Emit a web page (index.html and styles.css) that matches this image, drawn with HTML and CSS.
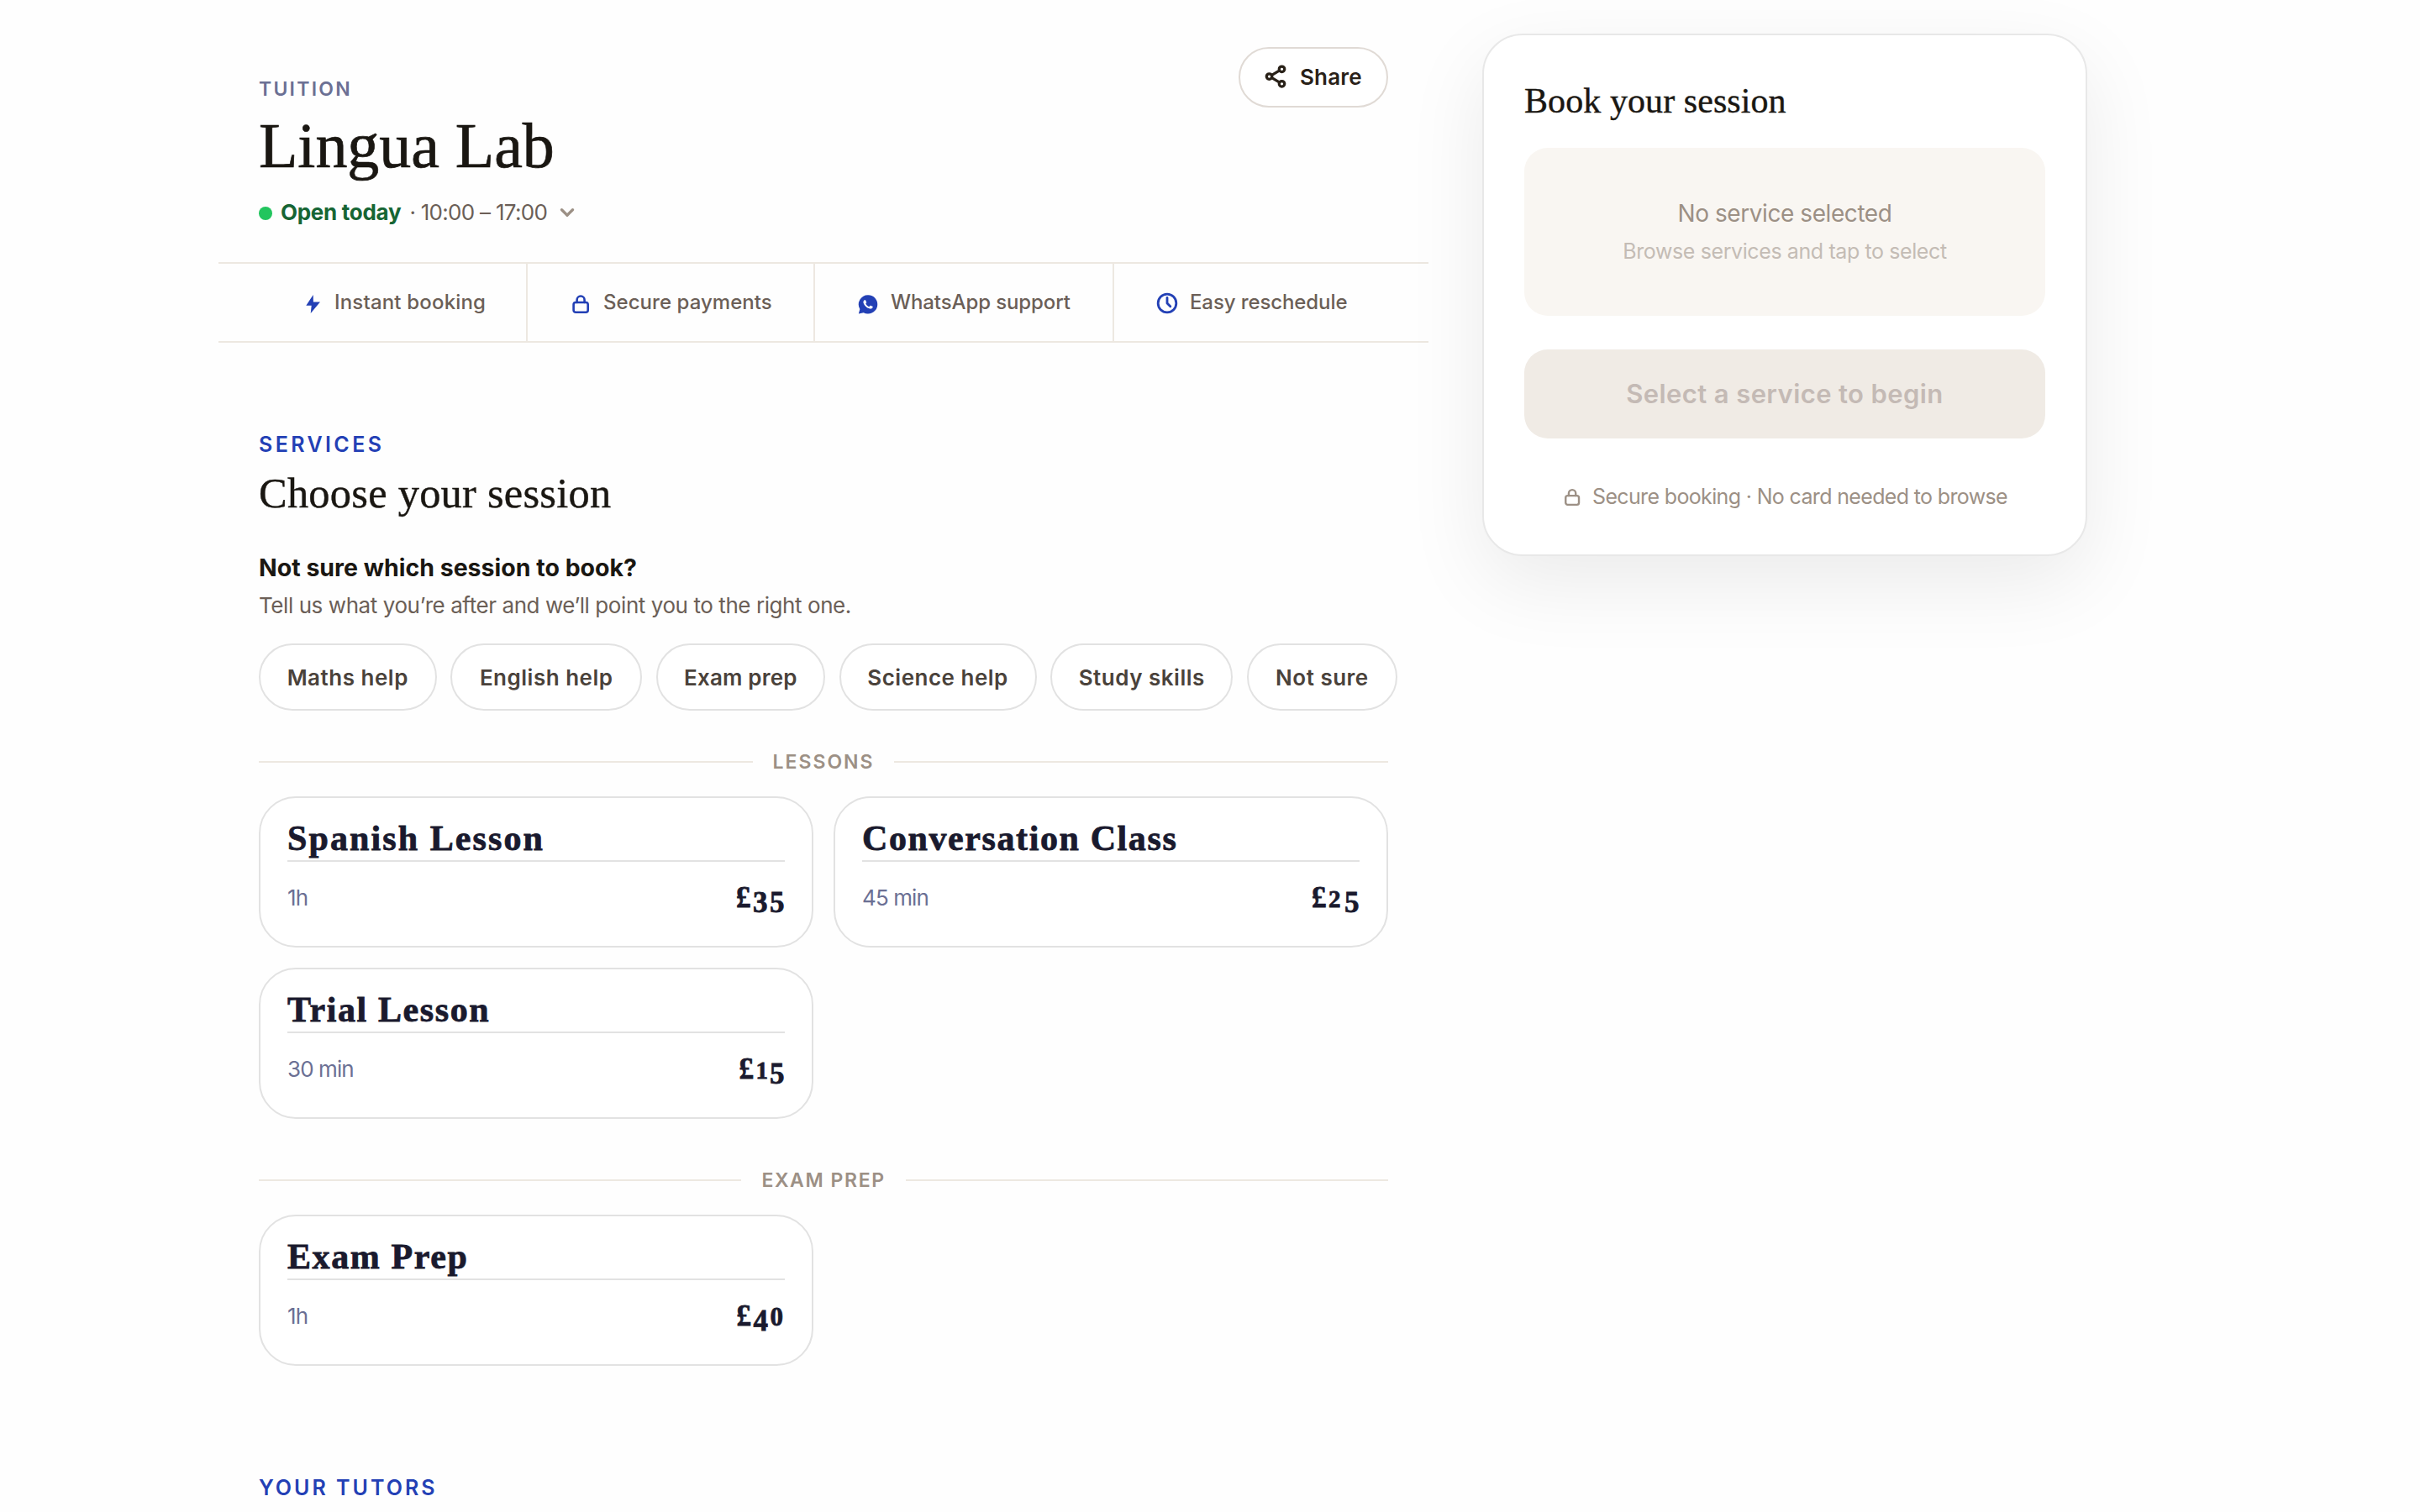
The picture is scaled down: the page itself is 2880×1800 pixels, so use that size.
FILE: index.html
```
<!DOCTYPE html>
<html lang="en">
<head>
<meta charset="UTF-8">
<meta name="viewport" content="width=device-width, initial-scale=1">
<title>Lingua Lab</title>
<link rel="stylesheet" href="styles.css">
</head>
<body>
<div class="page">
  <main class="main">
    <header class="header">
      <div class="intro">
        <p class="kicker">TUITION</p>
        <h1 class="name">Lingua Lab</h1>
        <div class="hours">
          <span class="dot"></span>
          <span class="open">Open today</span>
          <span class="time">· 10:00 – 17:00</span>
          <svg class="chevron" viewBox="0 0 24 24"><polyline points="6 9 12 15 18 9"/></svg>
        </div>
      </div>
      <button class="share">
        <svg viewBox="0 0 24 24"><circle cx="18" cy="5" r="2.6"/><circle cx="6" cy="12" r="2.6"/><circle cx="18" cy="19" r="2.6"/><path d="M8.500 13.300l7 4.200M15.500 6.500l-7 4.200"/></svg>
        <span>Share</span>
      </button>
    </header>

    <div class="trust">
      <div class="trust-item">
        <svg viewBox="0 0 26 26"><path class="solid" d="M14.700 3L6.300 15.700H12.700L11.700 25L23 11.500H14.900Z"/></svg>
        <span class="t1">Instant booking</span>
      </div>
      <div class="trust-item">
        <svg viewBox="0 0 26 26"><rect x="4.600" y="12" width="17.100" height="11.700" rx="2.500"/><path d="M8.600 12V9a4.500 4.500 0 0 1 9 0v3"/></svg>
        <span class="t2">Secure payments</span>
      </div>
      <div class="trust-item">
        <svg viewBox="-2 -3.500 28 28"><path class="solid" d="M12 0a12 12 0 1 1-5.700 22.500L0 24l1.600-6A12 12 0 0 1 12 0z"/><path class="phone" d="M17.472 14.382c-.297-.149-1.758-.867-2.030-.967-.273-.099-.471-.148-.670.150-.197.297-.767.966-.940 1.164-.173.199-.347.223-.644.075-.297-.150-1.255-.463-2.390-1.475-.883-.788-1.480-1.761-1.653-2.059-.173-.297-.018-.458.130-.606.134-.133.298-.347.446-.520.149-.174.198-.298.298-.497.099-.198.050-.371-.025-.520-.075-.149-.669-1.612-.916-2.207-.242-.579-.487-.500-.669-.510-.173-.008-.371-.010-.570-.010-.198 0-.520.074-.792.372-.272.297-1.040 1.016-1.040 2.479 0 1.462 1.065 2.875 1.213 3.074.149.198 2.096 3.200 5.077 4.487.709.306 1.262.489 1.694.625.712.227 1.360.195 1.871.118.571-.085 1.758-.719 2.006-1.413.248-.694.248-1.289.173-1.413-.074-.124-.272-.198-.570-.347z"/></svg>
        <span class="t3">WhatsApp support</span>
      </div>
      <div class="trust-item">
        <svg viewBox="0 0 24 24"><circle cx="12" cy="12" r="10"/><polyline points="12 6 12 12 15.500 15.500"/></svg>
        <span class="t3">Easy reschedule</span>
      </div>
    </div>

    <section class="services">
      <p class="label">SERVICES</p>
      <h2 class="heading">Choose your session</h2>
      <h3 class="ask">Not sure which session to book?</h3>
      <p class="hint">Tell us what you’re after and we’ll point you to the right one.</p>
      <div class="chips">
        <button>Maths help</button>
        <button>English help</button>
        <button class="snug">Exam prep</button>
        <button>Science help</button>
        <button>Study skills</button>
        <button>Not sure</button>
      </div>

      <div class="divider lessons"><span>LESSONS</span></div>
      <div class="cards">
        <article class="card">
          <h4 class="wide">Spanish Lesson</h4>
          <div class="meta"><span class="length">1h</span><span class="price">£<i class="low">35</i></span></div>
        </article>
        <article class="card">
          <h4>Conversation Class</h4>
          <div class="meta"><span class="length">45 min</span><span class="price">£<i class="mid">2</i><i class="low">5</i></span></div>
        </article>
        <article class="card">
          <h4>Trial Lesson</h4>
          <div class="meta"><span class="length">30 min</span><span class="price">£<i class="mid one">1</i><i class="low">5</i></span></div>
        </article>
      </div>

      <div class="divider exam"><span>EXAM PREP</span></div>
      <div class="cards">
        <article class="card">
          <h4>Exam Prep</h4>
          <div class="meta"><span class="length">1h</span><span class="price">£<i class="low">4</i><i class="mid zero">0</i></span></div>
        </article>
      </div>
    </section>

    <section class="tutors">
      <p class="label">YOUR TUTORS</p>
    </section>
  </main>

  <aside class="booking">
    <h2>Book your session</h2>
    <div class="empty">
      <p class="none">No service selected</p>
      <p class="browse">Browse services and tap to select</p>
    </div>
    <button class="begin" disabled>Select a service to begin</button>
    <div class="secure">
      <svg viewBox="0 0 26 26"><rect x="4.600" y="12" width="17.100" height="11.700" rx="2.500"/><path d="M8.600 12V9a4.500 4.500 0 0 1 9 0v3"/></svg>
      <span>Secure booking · No card needed to browse</span>
    </div>
  </aside>
</div>
</body>
</html>
```
FILE: styles.css
```
*{ box-sizing:border-box; margin:0; padding:0; }
body{
  height: 1800px;
  overflow: hidden;
  background: #fefefe;
  color: #1a1712;
  font-family: "Inter", "Liberation Sans", sans-serif;
  font-size: 26px;
  line-height: 40px;
}
button{
  font-family: inherit;
  background: #fff;
  white-space: nowrap;
}
svg{
  display: block;
  flex: none;
  fill: none;
  stroke: currentColor;
  stroke-linecap: round;
  stroke-linejoin: round;
}
span, p, h1, h2, h3, h4{ white-space: nowrap; }

.page{
  display: flex;
  align-items: flex-start;
  padding-left: 260px;
}
.main{ width: 1440px; }

/* header */
.header{
  display: flex;
  justify-content: space-between;
  align-items: flex-start;
  height: 312px;
  padding: 56px 48px 0;
}
.intro{ padding-top: 34px; }
.kicker{
  font-size: 23px;
  font-weight: 600;
  line-height: 32px;
  letter-spacing: 2.25px;
  color: #6b7094;
}
.name{
  margin-top: 7px;
  font-family: "Liberation Serif", serif;
  font-size: 76px;
  font-weight: 400;
  line-height: 88px;
  letter-spacing: -.07px;
  -webkit-text-stroke: .7px #1a1712;
}
.hours{
  display: flex;
  align-items: center;
  margin-top: 20px;
  line-height: 32px;
}
.dot{
  width: 16px;
  height: 16px;
  margin-top: 2px;
  border-radius: 50%;
  background: #22c55e;
}
.open{
  margin-left: 10px;
  font-weight: 700;
  letter-spacing: -.28px;
  color: #166534;
}
.time{
  margin-left: 10px;
  letter-spacing: -.71px;
  color: #6b5f57;
}
.chevron{
  width: 26px;
  height: 26px;
  margin-left: 11px;
  stroke-width: 3;
  color: #9c9085;
}
.share{
  display: flex;
  align-items: center;
  gap: 14px;
  width: 178px;
  height: 72px;
  padding: 0 0 2px 27px;
  border: 2px solid #e0dad5;
  border-radius: 36px;
  font-size: 26px;
  font-weight: 600;
  letter-spacing: .2px;
  color: #292118;
}
.share svg{
  width: 30px;
  height: 30px;
  stroke-width: 2.6;
}

/* trust bar */
.trust{
  display: grid;
  grid-template-columns: 320px 342px 356px 1fr;
  height: 96px;
  padding: 0 48px;
  border-top: 2px solid #ede8e1;
  border-bottom: 2px solid #ede8e1;
  font-size: 24px;
  font-weight: 500;
  color: #6b5f57;
}
.trust-item{
  display: flex;
  align-items: center;
  gap: 14px;
  padding-left: 50px;
  border-right: 2px solid #ede8e1;
}
.trust-item:last-child{ border-right: 0; }
.trust-item svg{
  width: 26px;
  height: 26px;
  margin-top: 1px;
  stroke-width: 2.6;
  color: #2340b5;
}
.trust-item .solid{ fill: currentColor; stroke: none; }
.trust-item .phone{ fill: #fff; stroke: none; }
.t1{ letter-spacing: .18px; }
.t2{ letter-spacing: .05px; }
.t3{ letter-spacing: -.1px; }

/* services */
.services{ padding: 105px 48px 0; }
.label{
  font-size: 25px;
  font-weight: 600;
  line-height: 32px;
  letter-spacing: 3.4px;
  color: #2340b5;
}
.heading{
  margin-top: 12px;
  font-family: "Liberation Serif", serif;
  font-size: 50.5px;
  font-weight: 400;
  line-height: 60px;
  letter-spacing: .22px;
  -webkit-text-stroke: .4px #1a1712;
}
.ask{
  margin-top: 39px;
  font-size: 28.5px;
  font-weight: 700;
}
.hint{
  margin-top: 5px;
  letter-spacing: -.43px;
  color: #6b5f57;
}
.chips{
  display: grid;
  grid-template-columns: 211.5px 228px 201px 235px 217px 179px;
  gap: 16.7px;
  margin-top: 25px;
}
.chips button{
  height: 80px;
  border: 2px solid #e2e2e2;
  border-radius: 40px;
  font-size: 26px;
  font-weight: 600;
  letter-spacing: .5px;
  color: #4a423b;
}
.chips .snug{ letter-spacing: .2px; }
.divider{
  display: flex;
  align-items: center;
  gap: 24px;
  padding-top: 1px;
  font-size: 23px;
  font-weight: 600;
  line-height: 31px;
  letter-spacing: 2px;
  color: #9c9085;
}
.divider::before, .divider::after{
  content: "";
  flex: 1;
  height: 2px;
  margin-bottom: 1px;
  background: #ede8e1;
}
.lessons{ margin-top: 45px; }
.exam{ margin-top: 57px; letter-spacing: 1.6px; }
.cards{
  display: grid;
  grid-template-columns: 1fr 1fr;
  gap: 24px;
  margin-top: 25px;
}
.card{
  height: 180px;
  padding: 24px 32px 0;
  border: 2px solid #e2e2e2;
  border-radius: 44px;
  background: #fff;
  color: #1a1a2e;
}
.card h4{
  height: 52px;
  border-bottom: 2px solid #e2e2e2;
  font-family: "Liberation Serif", serif;
  font-size: 42px;
  font-weight: 700;
  line-height: 49px;
  letter-spacing: 1.6px;
  -webkit-text-stroke: .8px #1a1a2e;
}
.card .wide{ letter-spacing: 2.1px; }
.meta{
  display: flex;
  justify-content: space-between;
  align-items: center;
  height: 40px;
  margin-top: 23px;
}
.length{
  letter-spacing: -.9px;
  color: #6b7094;
}
.price{
  margin-right: -2px;
  font-family: "Liberation Serif", serif;
  font-size: 35px;
  font-weight: 700;
  letter-spacing: 2.5px;
  -webkit-text-stroke: .8px #1a1a2e;
}
/* old-style figures */
.price i{ font-style: normal; line-height: 0; }
.low{ vertical-align: -6px; }
.mid{ font-size: 29px; letter-spacing: 4.5px; }
.one{ letter-spacing: 2px; }
.zero{ font-size: 31px; letter-spacing: 4px; }

.tutors{ padding: 129px 48px 0; }
.tutors .label{ letter-spacing: 3px; }

/* booking panel */
.booking{
  width: 720px;
  height: 622px;
  margin: 40px 0 0 64px;
  padding: 52px 48px 0;
  border: 2px solid #e8e8e8;
  border-radius: 48px;
  background: #fff;
  box-shadow: 0 32px 96px rgba(0,0,0,.08);
}
.booking h2{
  font-family: "Liberation Serif", serif;
  font-size: 42px;
  font-weight: 400;
  line-height: 52px;
  letter-spacing: .08px;
  -webkit-text-stroke: .4px #1a1712;
}
.empty{
  height: 200px;
  margin-top: 30px;
  padding-top: 58px;
  border-radius: 28px;
  background: #f9f6f2;
  text-align: center;
}
.none{
  font-size: 28px;
  letter-spacing: -.43px;
  color: #9c9085;
}
.browse{
  margin-top: 5px;
  font-size: 25px;
  letter-spacing: -.4px;
  color: #c4bcb5;
}
.begin{
  display: block;
  width: 100%;
  height: 106px;
  margin-top: 40px;
  padding-bottom: 1px;
  border: 0;
  border-radius: 28px;
  background: #f0ebe5;
  font-size: 31px;
  font-weight: 600;
  letter-spacing: .4px;
  color: #c4bab5;
}
.secure{
  display: flex;
  justify-content: center;
  align-items: center;
  gap: 12px;
  margin-top: 53px;
  font-size: 25px;
  line-height: 32px;
  letter-spacing: -.65px;
  color: #9c9085;
}
.secure svg{
  width: 24px;
  height: 24px;
  stroke-width: 2.6;
}
```
